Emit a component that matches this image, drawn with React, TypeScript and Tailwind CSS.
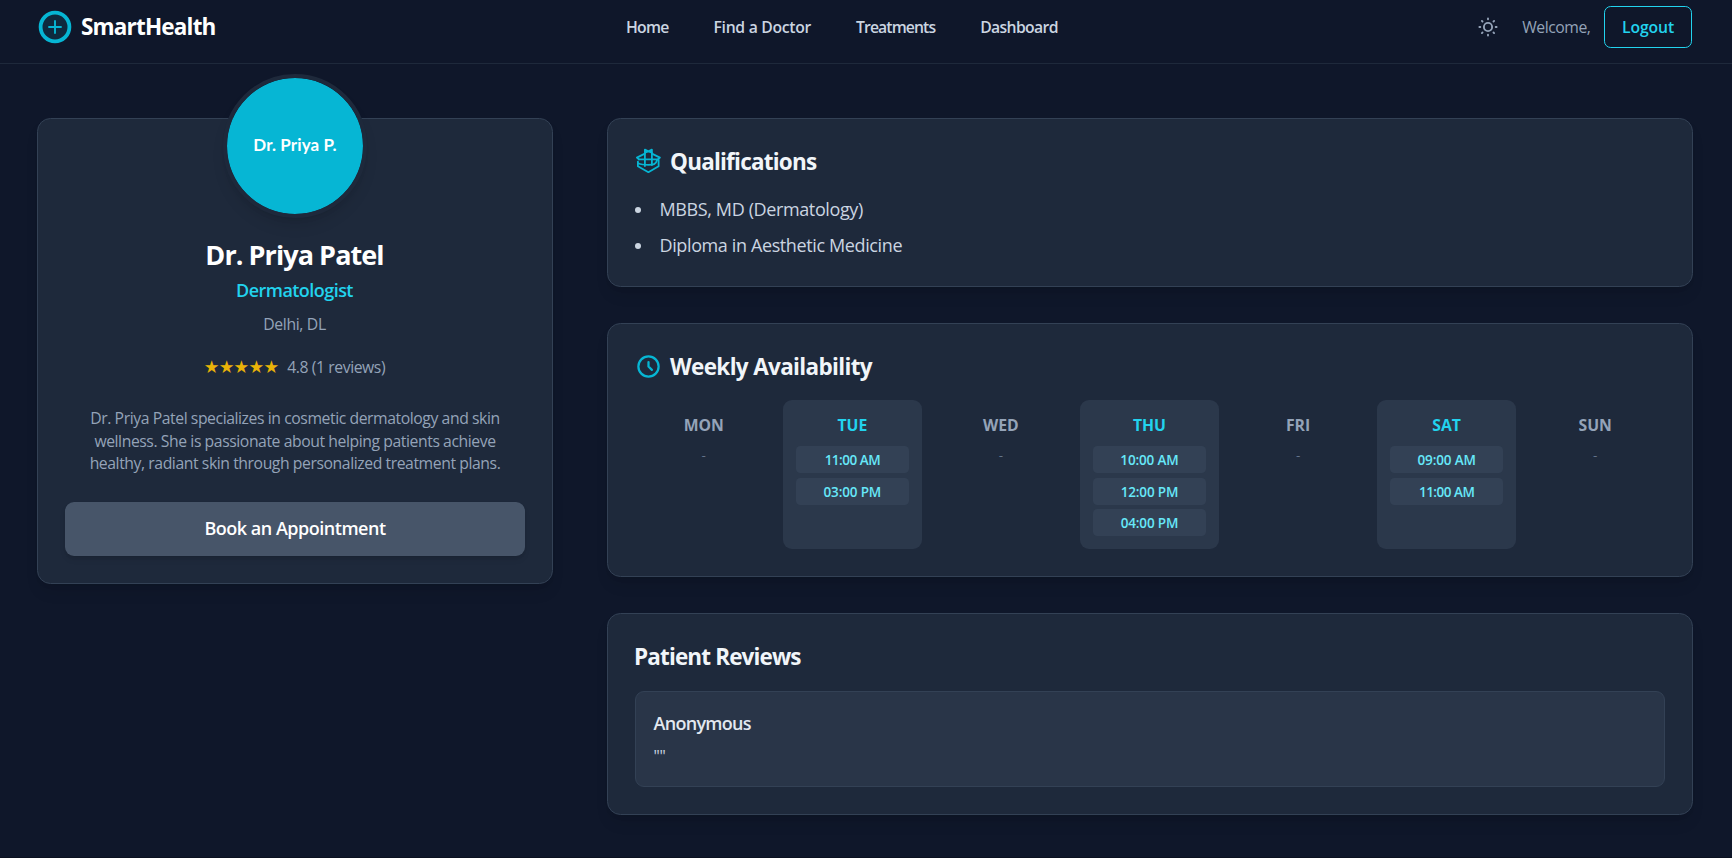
import type { ReactNode } from "react";

const NAV = [
  { label: "Home", track: "tracking-[-0.76px]" },
  { label: "Find a Doctor", track: "tracking-[-0.31px]" },
  { label: "Treatments", track: "tracking-[-0.9px]" },
  { label: "Dashboard", track: "tracking-[-0.65px]" },
];

const DAYS = [
  { day: "MON", slots: [] as string[] },
  { day: "TUE", slots: ["11:00 AM", "03:00 PM"] },
  { day: "WED", slots: [] },
  { day: "THU", slots: ["10:00 AM", "12:00 PM", "04:00 PM"] },
  { day: "FRI", slots: [] },
  { day: "SAT", slots: ["09:00 AM", "11:00 AM"] },
  { day: "SUN", slots: [] },
];

const QUALIFICATIONS = ["MBBS, MD (Dermatology)", "Diploma in Aesthetic Medicine"];

function LogoIcon() {
  return (
    <svg className="size-9 shrink-0" viewBox="0 0 36 36" fill="none" stroke="#06b6d4">
      <circle cx="18" cy="18" r="14.4" strokeWidth="3.8" fill="#06b6d4" fillOpacity="0.12" />
      <path d="M18 12v12M12 18h12" strokeWidth="1.9" strokeLinecap="round" />
    </svg>
  );
}

function SunIcon() {
  return (
    <svg className="size-5 shrink-0" viewBox="-10 -10 20 20" fill="none" stroke="#94a3b8" strokeWidth="1.9" strokeLinecap="round">
      <circle r="4.1" />
      <path d="M0-8.6v.9M0 8.6v-.9M-8.6 0h.9M8.6 0h-.9M-6.1-6.1l.6.6M6.1-6.1l-.6.6M-6.1 6.1l.6-.6M6.1 6.1l-.6-.6" />
    </svg>
  );
}

function CapIcon() {
  return (
    <svg className="size-[27px] shrink-0" viewBox="-1 -1 27 27" fill="none" stroke="#06b6d4" strokeWidth="1.8" strokeLinejoin="round" strokeLinecap="round">
      <path d="M8.9 3.6V.6L12.4 2.2 15.9.6v3L12.4 2.4z" />
      <path d="M8.9 4.6.9 8.6l2 1.8M15.9 4.6l8 4-2 1.8" />
      <path d="M2.8 10.4h19.4M8.9 3.8v13.2M15.9 3.8V16" />
      <path d="M1.9 12.6v4.6l10.5 6 10.2-6v-6.4" />
      <path d="M2.2 14.2c3 1.4 6 1.6 10.2 1.6 5 0 7.6-.4 8.6-4.6" />
    </svg>
  );
}

function ClockIcon() {
  return (
    <svg className="size-[27px] shrink-0" viewBox="0 0 24 24" fill="none" stroke="#06b6d4" strokeWidth="2" strokeLinecap="round" strokeLinejoin="round">
      <path d="M12 8v4l3 3m6-3a9 9 0 11-18 0 9 9 0 0118 0z" />
    </svg>
  );
}

function Card({ children, className = "" }: { children: ReactNode; className?: string }) {
  return (
    <section className={`rounded-[13.5px] border border-[#334155] bg-[#1e293b] p-[27px] shadow-lg ${className}`}>
      {children}
    </section>
  );
}

function CardTitle({ icon, children, className = "" }: { icon?: ReactNode; children: ReactNode; className?: string }) {
  return (
    <h2 className={`mb-[18px] flex items-center gap-[8px] text-[22.5px] leading-[31.5px] font-bold text-[#f1f5f9] ${className}`}>
      {icon}
      {children}
    </h2>
  );
}

function Header() {
  return (
    <header className="flex h-16 items-start border-b border-[#1e293b] pt-[6px] pr-[40px] pl-[37px]">
      <div className="flex h-[42px] w-[589px] items-center gap-[8px]">
        <LogoIcon />
        <span className="text-[22.5px] font-bold tracking-[-0.82px] text-white">SmartHealth</span>
      </div>
      <nav className="flex h-[42px] items-center gap-[45px] pt-[2px] text-[15.75px] font-semibold text-[#cbd5e1]">
        {NAV.map((n) => (
          <a key={n.label} className={n.track}>
            {n.label}
          </a>
        ))}
      </nav>
      <div className="ml-auto flex h-[42px] items-center">
        <SunIcon />
        <span className="mr-[13.5px] ml-[24px] pt-[2px] text-[15.75px] tracking-[-0.44px] text-[#94a3b8]">Welcome,</span>
        <button className="h-[42px] w-[88px] rounded-[6.75px] border border-[#22d3ee] pt-[2px] text-[15.75px] font-semibold tracking-[-0.1px] text-[#22d3ee]">
          Logout
        </button>
      </div>
    </header>
  );
}

function Profile() {
  return (
    <Card className="flex flex-col items-center self-start text-center">
      <div className="-mt-[72px] flex size-[144px] items-center justify-center rounded-full border-4 border-[#1e293b] bg-[#06b6d4] bg-clip-padding pb-[3px] font-[Lato] text-[17px] font-bold tracking-[0.1px] text-white shadow-lg">
        Dr. Priya P.
      </div>
      <h1 className="mt-[18.5px] mr-[1px] text-[27px] leading-[36px] font-bold tracking-[-0.93px] text-white">Dr. Priya Patel</h1>
      <p className="mt-[4.5px] mr-[1px] text-[18px] leading-[27px] font-semibold tracking-[-0.54px] text-[#22d3ee]">Dermatologist</p>
      <p className="mt-[9px] mr-[1px] text-[15.75px] leading-[22.75px] tracking-[-0.35px] text-[#94a3b8]">Delhi, DL</p>
      <div className="mt-[20px] mr-[1px] flex items-baseline gap-[9px] text-[15.75px] leading-[23px] tracking-[-0.43px] text-[#94a3b8]">
        <span className="font-[DejaVu_Sans] text-[17.5px] leading-[23px] tracking-[-0.8px] text-[#eab308]">★★★★★</span>
        <span>4.8 (1 reviews)</span>
      </div>
      <p className="mt-[28px] text-[15.75px] leading-[22.75px] tracking-[-0.43px] whitespace-nowrap text-[#94a3b8]">
        Dr. Priya Patel specializes in cosmetic dermatology and skin
        <br />
        wellness. She is passionate about helping patients achieve
        <br />
        healthy, radiant skin through personalized treatment plans.
      </p>
      <button className="mt-[27px] h-[54px] w-full rounded-[9px] bg-[#475569] pb-[1px] text-[18px] font-semibold tracking-[-0.48px] text-white shadow-md">
        Book an Appointment
      </button>
    </Card>
  );
}

function Qualifications() {
  return (
    <Card>
      <CardTitle icon={<CapIcon />} className="tracking-[-0.78px]">
        Qualifications
      </CardTitle>
      <ul className="flex flex-col gap-[9px] text-[18px] leading-[27px] tracking-[-0.38px] text-[#cbd5e1]">
        {QUALIFICATIONS.map((q) => (
          <li key={q} className="flex items-center">
            <span className="mt-[1px] mr-[18.5px] size-[6px] rounded-full bg-[#cbd5e1]" />
            {q}
          </li>
        ))}
      </ul>
    </Card>
  );
}

function Availability() {
  return (
    <Card>
      <CardTitle icon={<ClockIcon />} className="tracking-[-0.66px]">
        Weekly Availability
      </CardTitle>
      <div className="-ml-px grid grid-cols-7 gap-[9px] text-center">
        {DAYS.map(({ day, slots }) => {
          const open = slots.length > 0;
          return (
            <div key={day} className={open ? "rounded-[9px] bg-[#2b384b] p-[13.5px] pb-[12.5px]" : "p-[13.5px]"}>
              <h3
                className={
                  open
                    ? "mb-[10px] text-[15.75px] leading-[22.75px] font-bold text-[#22d3ee]"
                    : "mb-[10px] text-[15.75px] leading-[22.75px] font-bold text-[#94a3b8]"
                }
              >
                {day}
              </h3>
              {open ? (
                <div className="flex flex-col gap-[4.5px]">
                  {slots.map((s) => (
                    <span
                      key={s}
                      className={`h-[27px] rounded-[4.5px] bg-[#334155] text-[13.5px] leading-[28px] font-semibold text-[#67e8f9] ${
                        s === "11:00 AM" ? "tracking-[-0.5px]" : "tracking-[-0.15px]"
                      }`}
                    >
                      {s}
                    </span>
                  ))}
                </div>
              ) : (
                <p className="text-[13.5px] leading-[18px] text-[#64748b]">-</p>
              )}
            </div>
          );
        })}
      </div>
    </Card>
  );
}

function Reviews() {
  return (
    <Card>
      <CardTitle className="-ml-px tracking-[-0.86px]">Patient Reviews</CardTitle>
      <article className="mt-[19px] rounded-[9px] border border-[#334155] bg-[#293548] px-[17.5px] pt-[18px] pb-[18px]">
        <p className="text-[18px] leading-[27px] font-semibold tracking-[-0.72px] text-[#e2e8f0]">Anonymous</p>
        <p className="mt-[8px] text-[15.75px] leading-[22.75px] tracking-[-0.3px] text-[#cbd5e1]">""</p>
      </article>
    </Card>
  );
}

export default function App() {
  return (
    <div className="h-[858px] overflow-hidden border-b border-[#0b1120] bg-[#0f172a] font-['Open_Sans','Noto_Sans',sans-serif]">
      <Header />
      <main className="grid grid-cols-3 gap-[54px] pt-[54px] pr-[39px] pl-[37px]">
        <Profile />
        <div className="col-span-2 flex flex-col gap-[36px]">
          <Qualifications />
          <Availability />
          <Reviews />
        </div>
      </main>
    </div>
  );
}
